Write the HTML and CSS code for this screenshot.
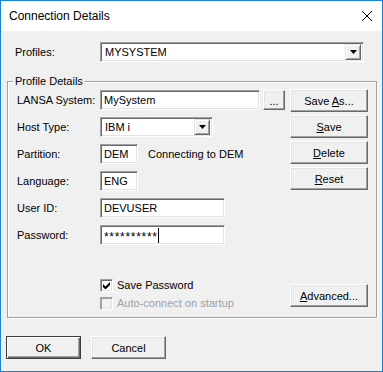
FILE: index.html
```html
<!DOCTYPE html>
<html>
<head>
  <title>Connection Details</title>
  <link rel="stylesheet" href="styles.css">
</head>
<body>
  <div class="window">
    <div class="titlebar">
      <span class="title">Connection Details</span>
      <svg class="close" viewBox="0 0 10 10"><path d="M0 0L10 10M10 0L0 10" stroke="#000" stroke-width="1"/></svg>
    </div>

    <div class="client">
      <div class="profile-row">
        <span class="lbl">Profiles:</span>
        <div class="combo profiles">
          <span class="combo-text">MYSYSTEM</span>
          <span class="drop"><svg viewBox="0 0 7 4"><path d="M0 0h7L3.5 4z"/></svg></span>
        </div>
      </div>

      <fieldset class="group">
        <legend>Profile Details</legend>
        <div class="group-body">
          <div class="fields">
            <div class="row">
              <span class="lbl">LANSA System:</span>
              <div class="edit system">MySystem</div>
              <button class="btn dots">...</button>
            </div>
            <div class="row">
              <span class="lbl">Host Type:</span>
              <div class="combo host">
                <span class="combo-text">IBM i</span>
                <span class="drop"><svg viewBox="0 0 7 4"><path d="M0 0h7L3.5 4z"/></svg></span>
              </div>
            </div>
            <div class="row">
              <span class="lbl">Partition:</span>
              <div class="edit short">DEM</div>
              <span class="note">Connecting to DEM</span>
            </div>
            <div class="row">
              <span class="lbl">Language:</span>
              <div class="edit short">ENG</div>
            </div>
            <div class="row">
              <span class="lbl">User ID:</span>
              <div class="edit medium">DEVUSER</div>
            </div>
            <div class="row">
              <span class="lbl">Password:</span>
              <div class="edit medium"><span class="stars">**********</span><span class="caret"></span></div>
            </div>

            <div class="checks">
              <div class="check">
                <span class="box"><svg viewBox="0 0 7 7"><path d="M0 2v3l2 2h1l4-4V0L2.5 4.5z"/></svg></span>
                <span>Save Password</span>
              </div>
              <div class="check disabled">
                <span class="box"></span>
                <span>Auto-connect on startup</span>
              </div>
            </div>
          </div>

          <div class="side">
            <button class="btn">Save <u>A</u>s...</button>
            <button class="btn"><u>S</u>ave</button>
            <button class="btn"><u>D</u>elete</button>
            <button class="btn"><u>R</u>eset</button>
            <button class="btn advanced"><u>A</u>dvanced...</button>
          </div>
        </div>
      </fieldset>

      <div class="footer">
        <button class="btn default">OK</button>
        <button class="btn">Cancel</button>
      </div>
    </div>
  </div>
</body>
</html>
```

FILE: styles.css
```css
:root {
  --face: #f0f0f0;
  --shadow: #a0a0a0;
  --dark: #696969;
  --light: #e3e3e3;
  --accent: #1883d7;
  --disabled: #a0a0a0;
}

* {
  margin: 0;
  padding: 0;
  box-sizing: border-box;
}

body {
  width: 383px;
  height: 372px;
  font-family: "Liberation Sans", Arial, sans-serif;
  font-size: 11px;
  color: #000;
  background: #fff;
}

.window {
  width: 383px;
  height: 372px;
  border: 1px solid var(--accent);
  display: flex;
  flex-direction: column;
}

.titlebar {
  height: 30px;
  background: #fff;
  display: flex;
  align-items: center;
  justify-content: space-between;
  padding: 0 10px 0 8px;
}

.title {
  font-size: 12px;
}

.close {
  width: 10px;
  height: 10px;
}

.client {
  flex: 1;
  background: var(--face);
  padding: 11px 5px 0 6px;
}

.profile-row {
  display: flex;
  align-items: center;
  height: 20px;
}

.profile-row .lbl {
  width: 93px;
  padding-left: 8px;
}

/* sunken controls */
.edit,
.combo,
.box {
  background: #fff;
  border: 1px solid;
  border-color: var(--shadow) #fff #fff var(--shadow);
  box-shadow: inset 1px 1px var(--dark), inset -1px -1px var(--light);
}

.edit {
  height: 20px;
  padding: 0 3px;
  display: flex;
  align-items: center;
}

.edit.system { width: 160px; }
.edit.short { width: 38px; }
.edit.medium { width: 125px; }

.combo {
  height: 20px;
  display: flex;
  align-items: center;
  padding: 2px;
}

.combo.profiles { width: 264px; }
.combo.host { width: 113px; }

.combo-text {
  flex: 1;
  padding-left: 2px;
}

.drop {
  width: 16px;
  height: 16px;
  background: var(--face);
  border: 1px solid;
  border-color: var(--light) var(--dark) var(--dark) var(--light);
  box-shadow: inset 1px 1px #fff, inset -1px -1px var(--shadow);
  display: flex;
  align-items: center;
  justify-content: center;
}

.drop svg {
  width: 7px;
  height: 4px;
}

/* group box */
.group {
  margin-top: 13px;
  border: 1px solid var(--shadow);
  box-shadow: inset 1px 1px #fff, 1px 1px #fff;
  padding: 0;
}

.group legend {
  margin-left: 5px;
  padding: 0 2px;
  line-height: 13px;
  background: var(--face);
}

.group-body {
  display: flex;
  height: 229px;
}

.fields {
  flex: 1;
  padding: 2px 0 0 9px;
  display: flex;
  flex-direction: column;
  gap: 7px;
}

.row {
  display: flex;
  align-items: center;
  height: 20px;
}

.row .lbl {
  width: 83px;
}

.note {
  margin-left: 10px;
}

.stars {
  font-size: 12px;
  letter-spacing: 0.7px;
  line-height: 12px;
  padding-top: 3px;
}

.caret {
  width: 1px;
  height: 15px;
  background: #000;
}

.checks {
  margin-top: 24px;
  padding-left: 83px;
}

.check {
  height: 18px;
  display: flex;
  align-items: center;
  gap: 4px;
}

.box {
  width: 13px;
  height: 13px;
  display: flex;
  align-items: center;
  justify-content: center;
}

.box svg {
  width: 7px;
  height: 7px;
}

.check.disabled {
  color: var(--disabled);
}

.check.disabled .box {
  background: var(--face);
  border-color: var(--shadow) #fff #fff var(--shadow);
  box-shadow: inset 1px 1px var(--shadow), inset -1px -1px var(--light);
}

/* buttons */
.btn {
  font: inherit;
  color: #000;
  background: var(--face);
  border: 1px solid;
  border-color: #fff var(--dark) var(--dark) #fff;
  box-shadow: inset -1px -1px var(--shadow), inset 1px 1px var(--light);
  height: 23px;
  width: 75px;
}

.btn.dots {
  width: 22px;
  height: 20px;
  margin-left: 3px;
  padding-top: 2px;
}

.side {
  width: 78px;
  margin-right: 8px;
  padding: 1px 0 10px;
  display: flex;
  flex-direction: column;
  gap: 3px;
}

.side .btn {
  width: 78px;
}

.side .advanced {
  margin-top: auto;
}

.footer {
  margin: 18px 0 0 -1px;
  display: flex;
  gap: 10px;
}

.btn.default {
  border: 1px solid #3c3c3c;
  box-shadow: inset 1px 1px #fff, inset -1px -1px var(--dark), inset -2px -2px var(--shadow);
}
```
